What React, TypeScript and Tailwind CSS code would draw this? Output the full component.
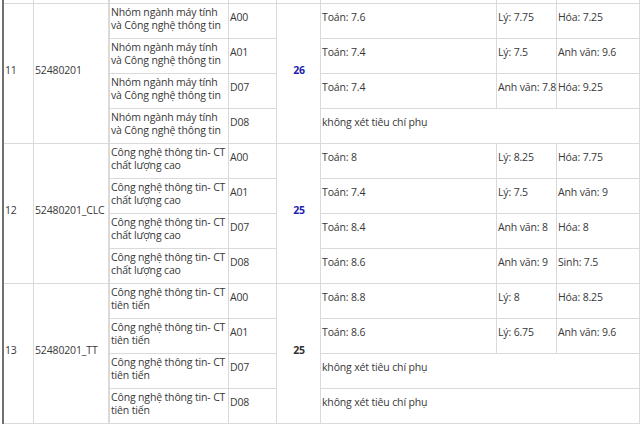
import React from "react";

type Sub = { name: string; combo: string; scores: string[] | null };
type Group = { stt: string; code: string; min: string; blue: boolean; rows: Sub[] };

const line = "border-[#dadada]";

const groups: Group[] = [
  {
    stt: "11",
    code: "52480201",
    min: "26",
    blue: true,
    rows: [
      { name: "Nhóm ngành máy tính và Công nghệ thông tin", combo: "A00", scores: ["Toán: 7.6", "Lý: 7.75", "Hóa: 7.25"] },
      { name: "Nhóm ngành máy tính và Công nghệ thông tin", combo: "A01", scores: ["Toán: 7.4", "Lý: 7.5", "Anh văn: 9.6"] },
      { name: "Nhóm ngành máy tính và Công nghệ thông tin", combo: "D07", scores: ["Toán: 7.4", "Anh văn: 7.8", "Hóa: 9.25"] },
      { name: "Nhóm ngành máy tính và Công nghệ thông tin", combo: "D08", scores: null },
    ],
  },
  {
    stt: "12",
    code: "52480201_CLC",
    min: "25",
    blue: true,
    rows: [
      { name: "Công nghệ thông tin- CT chất lượng cao", combo: "A00", scores: ["Toán: 8", "Lý: 8.25", "Hóa: 7.75"] },
      { name: "Công nghệ thông tin- CT chất lượng cao", combo: "A01", scores: ["Toán: 7.4", "Lý: 7.5", "Anh văn: 9"] },
      { name: "Công nghệ thông tin- CT chất lượng cao", combo: "D07", scores: ["Toán: 8.4", "Anh văn: 8", "Hóa: 8"] },
      { name: "Công nghệ thông tin- CT chất lượng cao", combo: "D08", scores: ["Toán: 8.6", "Anh văn: 9", "Sinh: 7.5"] },
    ],
  },
  {
    stt: "13",
    code: "52480201_TT",
    min: "25",
    blue: false,
    rows: [
      { name: "Công nghệ thông tin- CT tiên tiến", combo: "A00", scores: ["Toán: 8.8", "Lý: 8", "Hóa: 8.25"] },
      { name: "Công nghệ thông tin- CT tiên tiến", combo: "A01", scores: ["Toán: 8.6", "Lý: 6.75", "Anh văn: 9.6"] },
      { name: "Công nghệ thông tin- CT tiên tiến", combo: "D07", scores: null },
      { name: "Công nghệ thông tin- CT tiên tiến", combo: "D08", scores: null },
    ],
  },
];

const cell = `border-r border-b ${line} flex items-center pl-[1px] pb-[7px] whitespace-nowrap`;

export default function App() {
  return (
    <div className="w-[640px] h-[429px] overflow-hidden bg-white">
      <div
        className="ml-[2px] border-l-2 border-[#707070] grid grid-cols-[30px_75px_120px_48px_44px_176px_60px_1fr] grid-rows-[4px] auto-rows-[35px] text-[10.5px] tracking-[-0.15px] leading-[13px] text-[#383838]"
        style={{ fontFamily: '"Open Sans", "Noto Sans", sans-serif' }}
      >
        {/* tail of the previous row */}
        {[0, 1, 2, 3, 4, 5, 6, 7].map((i) => (
          <div key={i} className={`border-r border-b ${line} ${i === 2 ? "border-l" : ""}`} />
        ))}

        {groups.map((g) =>
          g.rows.map((r, ri) => (
            <React.Fragment key={g.stt + ri}>
              {ri === 0 && (
                <>
                  <div className={`${cell} row-span-4`}>{g.stt}</div>
                  <div className={`${cell} row-span-4`}>{g.code}</div>
                </>
              )}
              <div className={`border-r border-b border-l ${line} pl-[1px] pt-[2px] pr-[1px]`}>{r.name}</div>
              <div className={cell}>{r.combo}</div>
              {ri === 0 && (
                <div className={`${cell} row-span-4 justify-center pl-0 font-bold ${g.blue ? "text-[#1f1fb0]" : "text-[#333]"}`}>
                  {g.min}
                </div>
              )}
              {r.scores ? (
                r.scores.map((s, si) => (
                  <div key={si} className={cell}>
                    {s}
                  </div>
                ))
              ) : (
                <div className={`${cell} col-span-3`}>không xét tiêu chí phụ</div>
              )}
            </React.Fragment>
          ))
        )}
      </div>
    </div>
  );
}
